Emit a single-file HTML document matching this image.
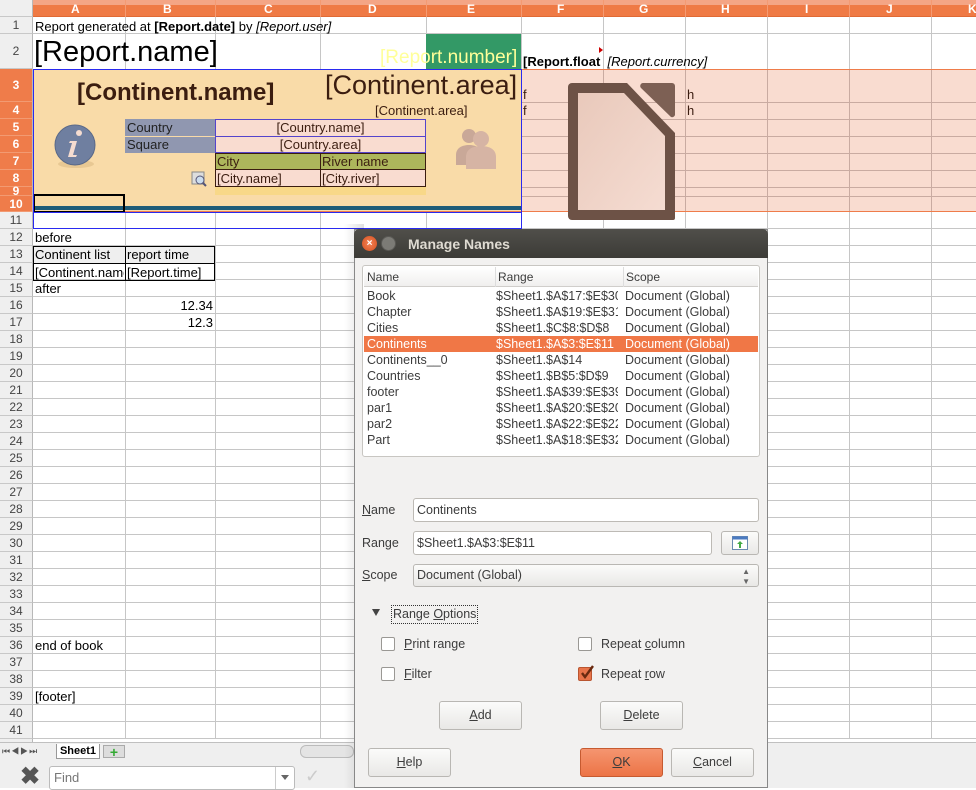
<!DOCTYPE html>
<html><head><meta charset="utf-8"><style>
*{margin:0;padding:0;box-sizing:border-box}
body{width:976px;height:788px;overflow:hidden;background:#fff;font-family:"Liberation Sans",sans-serif;font-size:13px;color:#000;position:relative}
.a{position:absolute}
.vl{position:absolute;top:17px;height:722px;width:1px;background:#c6c6c6}
.pv{position:absolute;top:70px;height:141px;width:1px;background:#c9aba1}
.rh{position:absolute;left:0;width:33px;text-align:center;color:#444;font-size:12px;background:#efefef;border-bottom:1px solid #c8c8c8;border-right:1px solid #b8b8b8}
.rh.o{background:#ef7c4a;color:#fff;font-weight:bold;border-bottom:1px solid #f29a72}
.t{position:absolute;white-space:nowrap;line-height:17px}
.dl{font-family:"Liberation Sans",sans-serif;font-size:12.5px;color:#3c3c3c}
.btn{position:absolute;height:29px;border:1px solid #b9b7b3;border-radius:3px;background:linear-gradient(#fbfbfa,#e9e8e6);text-align:center;line-height:27px;font-size:12.5px;color:#3c3c3c}
.inp{position:absolute;height:24px;border:1px solid #bdbab5;border-radius:3px;background:#fff;padding-left:3px;line-height:22px;font-size:12.5px;color:#3c3c3c}
.cb{position:absolute;width:14px;height:14px;border:1px solid #9a9894;border-radius:2px;background:#fff}
.lr{position:absolute;left:0;width:394px;height:16px;line-height:16px;font-size:12.5px;color:#3c3c3c}
.lr span{position:absolute}
</style></head><body>
<div class="a" style="left:33px;top:229px;width:943px;height:510px;background:repeating-linear-gradient(#fff 0 16px,#c6c6c6 16px 17px)"></div>
<div class="a" style="left:33px;top:17px;width:943px;height:52px;background:#fff"></div>
<div class="a" style="left:33px;top:33px;width:943px;height:1px;background:#c6c6c6"></div>
<div class="a" style="left:33px;top:212px;width:943px;height:17px;background:#fff;border-bottom:1px solid #c6c6c6"></div>
<div class="vl" style="left:125px"></div><div class="vl" style="left:215px"></div><div class="vl" style="left:320px"></div><div class="vl" style="left:426px"></div><div class="vl" style="left:521px"></div><div class="vl" style="left:603px"></div><div class="vl" style="left:685px"></div><div class="vl" style="left:767px"></div><div class="vl" style="left:849px"></div><div class="vl" style="left:931px"></div>
<!-- pink band -->
<div class="a" style="left:521px;top:69px;width:455px;height:143px;background-color:#f9dcd0;border-top:1px solid #ef7c4a;border-bottom:1px solid #ef7c4a;
background-image:linear-gradient(transparent 0 32px,#c9aba1 32px 33px,transparent 33px 49px,#c9aba1 49px 50px,transparent 50px 66px,#c9aba1 66px 67px,transparent 67px 83px,#c9aba1 83px 84px,transparent 84px 100px,#c9aba1 100px 101px,transparent 101px 117px,#c9aba1 117px 118px,transparent 118px 126px,#c9aba1 126px 127px,transparent 127px)"></div>
<div class="pv" style="left:603px"></div><div class="pv" style="left:685px"></div><div class="pv" style="left:767px"></div><div class="pv" style="left:849px"></div><div class="pv" style="left:931px"></div>
<!-- peach band -->
<div class="a" style="left:33px;top:69px;width:488px;height:143px;background:#f9dba8"></div>
<div class="a" style="left:33px;top:206px;width:488px;height:4px;background:#1d5b78"></div>
<div class="a" style="left:33px;top:211px;width:943px;height:1px;background:#ef7c4a"></div>
<div class="a" style="left:426px;top:34px;width:95px;height:35px;background:#339966"></div>
<!-- headers -->
<div class="a" style="left:0;top:0;width:976px;height:17px;background:linear-gradient(#f4a585 0 5px,#ef7a45 5px);border-bottom:1px solid #e06a35"></div>
<div class="a" style="left:0;top:0;width:33px;height:17px;background:#efefef;border-right:1px solid #b8b8b8;border-bottom:1px solid #c8c8c8"></div>
<div class="a" style="left:33px;top:0;width:943px;height:17px;font-weight:bold;font-size:12px;color:#fff;line-height:19px">
<span class="a" style="left:38px">A</span><span class="a" style="left:130px">B</span><span class="a" style="left:231px">C</span><span class="a" style="left:335px">D</span><span class="a" style="left:434px">E</span><span class="a" style="left:524px">F</span><span class="a" style="left:606px">G</span><span class="a" style="left:688px">H</span><span class="a" style="left:772px">I</span><span class="a" style="left:853px">J</span><span class="a" style="left:935px">K</span></div>
<div class="vl" style="top:0;height:17px;left:125px;background:#f49a72"></div><div class="vl" style="top:0;height:17px;left:215px;background:#f49a72"></div><div class="vl" style="top:0;height:17px;left:320px;background:#f49a72"></div><div class="vl" style="top:0;height:17px;left:426px;background:#f49a72"></div><div class="vl" style="top:0;height:17px;left:521px;background:#f49a72"></div><div class="vl" style="top:0;height:17px;left:603px;background:#f49a72"></div><div class="vl" style="top:0;height:17px;left:685px;background:#f49a72"></div><div class="vl" style="top:0;height:17px;left:767px;background:#f49a72"></div><div class="vl" style="top:0;height:17px;left:849px;background:#f49a72"></div><div class="vl" style="top:0;height:17px;left:931px;background:#f49a72"></div>
<div class="rh" style="top:17px;height:17px;line-height:17px">1</div>
<div class="rh" style="top:34px;height:35px;line-height:35px">2</div>
<div class="rh o" style="top:69px;height:33px;line-height:33px">3</div>
<div class="rh o" style="top:102px;height:17px;line-height:17px">4</div>
<div class="rh o" style="top:119px;height:17px;line-height:17px">5</div>
<div class="rh o" style="top:136px;height:17px;line-height:17px">6</div>
<div class="rh o" style="top:153px;height:17px;line-height:17px">7</div>
<div class="rh o" style="top:170px;height:17px;line-height:17px">8</div>
<div class="rh o" style="top:187px;height:9px;line-height:9px">9</div>
<div class="rh o" style="top:196px;height:16px;line-height:16px">10</div>
<div class="a" style="left:0;top:212px;width:33px;font-size:12px;color:#444;text-align:center;line-height:17px">
<div class="rh" style="position:static;height:17px">11</div><div class="rh" style="position:static;height:17px">12</div><div class="rh" style="position:static;height:17px">13</div><div class="rh" style="position:static;height:17px">14</div><div class="rh" style="position:static;height:17px">15</div><div class="rh" style="position:static;height:17px">16</div><div class="rh" style="position:static;height:17px">17</div><div class="rh" style="position:static;height:17px">18</div><div class="rh" style="position:static;height:17px">19</div><div class="rh" style="position:static;height:17px">20</div><div class="rh" style="position:static;height:17px">21</div><div class="rh" style="position:static;height:17px">22</div><div class="rh" style="position:static;height:17px">23</div><div class="rh" style="position:static;height:17px">24</div><div class="rh" style="position:static;height:17px">25</div><div class="rh" style="position:static;height:17px">26</div><div class="rh" style="position:static;height:17px">27</div><div class="rh" style="position:static;height:17px">28</div><div class="rh" style="position:static;height:17px">29</div><div class="rh" style="position:static;height:17px">30</div><div class="rh" style="position:static;height:17px">31</div><div class="rh" style="position:static;height:17px">32</div><div class="rh" style="position:static;height:17px">33</div><div class="rh" style="position:static;height:17px">34</div><div class="rh" style="position:static;height:17px">35</div><div class="rh" style="position:static;height:17px">36</div><div class="rh" style="position:static;height:17px">37</div><div class="rh" style="position:static;height:17px">38</div><div class="rh" style="position:static;height:17px">39</div><div class="rh" style="position:static;height:17px">40</div><div class="rh" style="position:static;height:17px">41</div><div class="rh" style="position:static;height:6px"></div></div>
<!-- cell text -->
<div class="t" style="left:35px;top:18px">Report generated at <b>[Report.date]</b> by <i>[Report.user]</i></div>
<div class="t" style="left:34px;top:36px;font-size:29px;line-height:32px">[Report.name]</div>
<div class="t" style="left:380px;top:47px;font-size:19px;line-height:22px;color:#ffff99">[Report.number]</div>
<div class="t" style="left:523px;top:53px"><b>[Report.float</b> &nbsp;<i>[Report.currency]</i></div>
<div class="a" style="left:599px;top:47px;width:0;height:0;border-left:4px solid #c00;border-top:3px solid transparent;border-bottom:3px solid transparent"></div>
<div class="t" style="left:77px;top:80px;font-size:24px;font-weight:bold;color:#3b1d10;line-height:26px">[Continent.name]</div>
<div class="t" style="left:325px;top:71px;font-size:27px;color:#3b1d10;line-height:29px">[Continent.area]</div>
<div class="t" style="left:375px;top:102px;color:#3b1d10">[Continent.area]</div>
<div class="a" style="left:125px;top:119px;width:90px;height:34px;background:#9097b0"></div>
<div class="a" style="left:125px;top:136px;width:90px;height:1px;background:#f9dba8"></div>
<div class="t" style="left:127px;top:119px;color:#222">Country</div>
<div class="t" style="left:127px;top:136px;color:#222">Square</div>
<div class="a" style="left:215px;top:119px;width:211px;height:34px;background:#f9dcd0;border:1px solid #5544cc"></div>
<div class="a" style="left:215px;top:136px;width:211px;height:1px;background:#5544cc"></div>
<div class="t" style="left:215px;width:211px;text-align:center;top:119px;color:#3b1d10">[Country.name]</div>
<div class="t" style="left:215px;width:211px;text-align:center;top:136px;color:#3b1d10">[Country.area]</div>
<div class="a" style="left:215px;top:153px;width:211px;height:17px;background:#adb65c;border:1px solid #3b1d10"></div>
<div class="a" style="left:215px;top:170px;width:211px;height:17px;background:#f9dcd0;border:1px solid #3b1d10;border-top:0"></div>
<div class="a" style="left:320px;top:153px;width:1px;height:34px;background:#3b1d10"></div>
<div class="a" style="left:215px;top:187px;width:211px;height:8px;background:#f8d888"></div>
<div class="t" style="left:217px;top:153px;color:#3b1d10">City</div><div class="t" style="left:322px;top:153px;color:#3b1d10">River name</div>
<div class="t" style="left:217px;top:170px;color:#3b1d10">[City.name]</div><div class="t" style="left:322px;top:170px;color:#3b1d10">[City.river]</div>
<div class="a" style="left:33px;top:194px;width:92px;height:19px;border:2px solid #000"></div>
<div class="a" style="left:33px;top:69px;width:489px;height:160px;border:1px solid #2a2af0"></div>
<div class="a" style="left:33px;top:212px;width:489px;height:1px;background:#2a2af0"></div>
<svg class="a" style="left:50px;top:120px" width="52" height="52"><ellipse cx="26" cy="44" rx="18" ry="4" fill="#e8c893"/><circle cx="25" cy="25" r="20" fill="#6f7fa0" stroke="#5a6988"/><circle cx="29" cy="13" r="3" fill="#f5dcd0"/><path d="M20 21h7l-4 14h4l-1 2h-8l4-14h-3z" fill="#f5dcd0"/></svg>
<svg class="a" style="left:452px;top:125px" width="50" height="46" fill="#c9a898"><circle cx="17" cy="11" r="7"/><path d="M4 40v-10c0-7 6-10 13-10s13 3 13 10v10z"/><circle cx="29" cy="14" r="8" fill="#d6b4a4"/><path d="M14 44v-12c0-8 7-11 15-11s15 3 15 11v12z" fill="#d6b4a4"/></svg>
<svg class="a" style="left:191px;top:171px" width="16" height="16"><rect x="1" y="1" width="12" height="12" fill="#ddd" stroke="#888"/><circle cx="9" cy="9" r="4" fill="#cde" stroke="#557"/><path d="M12 12l3 3" stroke="#557" stroke-width="2"/></svg>
<div class="t" style="left:523px;top:86px;color:#3b1d10">f</div><div class="t" style="left:523px;top:102px;color:#3b1d10">f</div>
<div class="t" style="left:687px;top:86px;color:#3b1d10">h</div><div class="t" style="left:687px;top:102px;color:#3b1d10">h</div>
<svg class="a" style="left:568px;top:83px" width="108" height="137"><defs><linearGradient id="g" x1="0" y1="0" x2="1" y2="1"><stop offset="0" stop-color="#e9c9bb"/><stop offset="1" stop-color="#f5dcd2"/></linearGradient></defs><path d="M4 0h55l48 50v85a2 2 0 0 1-2 2H4a4 4 0 0 1-4-4V4a4 4 0 0 1 4-4z" fill="#6d5246"/><path d="M75 0h29a3 3 0 0 1 3 3v29a3 3 0 0 1-4 2L73 5a3 3 0 0 1 2-5z" fill="#7d6054"/><path d="M10 10h46l41 43v74H10z" fill="url(#g)"/></svg>
<div class="t" style="left:35px;top:229px">before</div>
<div class="a" style="left:33px;top:246px;width:182px;height:35px;border:1px solid #000"></div>
<div class="a" style="left:34px;top:247px;width:180px;height:16px;background:#efefef"></div>
<div class="a" style="left:125px;top:246px;width:1px;height:35px;background:#000"></div><div class="a" style="left:33px;top:263px;width:182px;height:1px;background:#000"></div>
<div class="t" style="left:35px;top:246px">Continent list</div><div class="t" style="left:127px;top:246px">report time</div>
<div class="t" style="left:35px;top:264px;width:89px;overflow:hidden">[Continent.name]</div><div class="t" style="left:127px;top:264px">[Report.time]</div>
<div class="t" style="left:35px;top:280px">after</div>
<div class="t" style="left:125px;width:88px;text-align:right;top:297px">12.34</div>
<div class="t" style="left:125px;width:88px;text-align:right;top:314px">12.3</div>
<div class="t" style="left:35px;top:637px">end of book</div>
<div class="t" style="left:35px;top:688px">[footer]</div>
<div class="a" style="left:0;top:742px;width:976px;height:18px;background:#efefef;border-top:1px solid #c0c0c0"></div>
<div class="a" style="left:2px;top:746px;font-size:9px;color:#555;letter-spacing:1px">⏮◀▶⏭</div>
<div class="a" style="left:56px;top:744px;width:44px;height:15px;background:#fff;border:1px solid #999;border-top:0;font-weight:bold;font-size:11px;line-height:14px;text-align:center">Sheet1</div>
<div class="a" style="left:103px;top:745px;width:22px;height:13px;background:#ddd;border:1px solid #aaa;color:#3a3;font-weight:bold;text-align:center;line-height:12px;font-size:14px">+</div>
<div class="a" style="left:300px;top:745px;width:54px;height:13px;background:#e4e4e4;border:1px solid #bbb;border-radius:6px"></div>
<div class="a" style="left:0;top:760px;width:976px;height:28px;background:#efefef"></div>
<div class="a" style="left:20px;top:765px;font-size:24px;font-weight:bold;color:#555;line-height:24px">✖</div>
<div class="a" style="left:49px;top:766px;width:246px;height:24px;background:#fff;border:1px solid #bbb;border-radius:3px;color:#777;padding-left:4px;line-height:22px">Find</div>
<div class="a" style="left:275px;top:767px;width:1px;height:22px;background:#ccc"></div>
<div class="a" style="left:281px;top:775px;border-top:5px solid #666;border-left:4px solid transparent;border-right:4px solid transparent"></div>
<div class="a" style="left:305px;top:766px;color:#ccc;font-size:18px">✓</div>
<!-- dialog -->
<div class="a" style="left:344px;top:224px;width:20px;height:564px;background:linear-gradient(90deg,rgba(0,0,0,0),rgba(0,0,0,.12))"></div>
<div class="a" style="left:354px;top:229px;width:414px;height:559px;background:#f2f1f0;border:1px solid #888"></div>
<div class="a" style="left:354px;top:229px;width:414px;height:29px;background:linear-gradient(#504f4a,#3c3b37);border-radius:5px 5px 0 0"></div>
<div class="a" style="left:362px;top:236px;width:15px;height:15px;border-radius:50%;background:radial-gradient(#f58357,#d4501f);color:#fff;font-size:10px;text-align:center;line-height:15px;font-weight:bold">×</div>
<div class="a" style="left:381px;top:236px;width:15px;height:15px;border-radius:50%;background:#7c7b76;border:1px solid #5a5955"></div>
<div class="a" style="left:408px;top:236px;font-weight:bold;font-size:14px;color:#dfdbd2;line-height:16px">Manage Names</div>
<div class="a" style="left:362px;top:265px;width:398px;height:192px;background:#fff;border:1px solid #c8c6c2;border-radius:3px"></div>
<div class="a" style="left:364px;top:267px;width:394px;height:20px;background:linear-gradient(#fff,#f0efee);border-bottom:1px solid #d0cecb;font-size:12px;color:#3c3c3c;line-height:20px">
<span class="a" style="left:3px">Name</span><span class="a" style="left:131px;border-left:1px solid #ddd;padding-left:2px">Range</span><span class="a" style="left:259px;border-left:1px solid #ddd;padding-left:2px">Scope</span></div>
<div class="a" style="left:364px;top:288px;width:394px;height:165px;overflow:hidden">
<div class="lr" style="top:0"><span style="left:3px">Book</span><span style="left:132px;width:122px;overflow:hidden">$Sheet1.$A$17:$E$30</span><span style="left:261px">Document (Global)</span></div>
<div class="lr" style="top:16px"><span style="left:3px">Chapter</span><span style="left:132px;width:122px;overflow:hidden">$Sheet1.$A$19:$E$31</span><span style="left:261px">Document (Global)</span></div>
<div class="lr" style="top:32px"><span style="left:3px">Cities</span><span style="left:132px;width:122px;overflow:hidden">$Sheet1.$C$8:$D$8</span><span style="left:261px">Document (Global)</span></div>
<div class="lr" style="top:48px;background:#f07746;color:#fff"><span style="left:3px">Continents</span><span style="left:132px;width:122px;overflow:hidden">$Sheet1.$A$3:$E$11</span><span style="left:261px">Document (Global)</span></div>
<div class="lr" style="top:64px"><span style="left:3px">Continents__0</span><span style="left:132px;width:122px;overflow:hidden">$Sheet1.$A$14</span><span style="left:261px">Document (Global)</span></div>
<div class="lr" style="top:80px"><span style="left:3px">Countries</span><span style="left:132px;width:122px;overflow:hidden">$Sheet1.$B$5:$D$9</span><span style="left:261px">Document (Global)</span></div>
<div class="lr" style="top:96px"><span style="left:3px">footer</span><span style="left:132px;width:122px;overflow:hidden">$Sheet1.$A$39:$E$39</span><span style="left:261px">Document (Global)</span></div>
<div class="lr" style="top:112px"><span style="left:3px">par1</span><span style="left:132px;width:122px;overflow:hidden">$Sheet1.$A$20:$E$20</span><span style="left:261px">Document (Global)</span></div>
<div class="lr" style="top:128px"><span style="left:3px">par2</span><span style="left:132px;width:122px;overflow:hidden">$Sheet1.$A$22:$E$22</span><span style="left:261px">Document (Global)</span></div>
<div class="lr" style="top:144px"><span style="left:3px">Part</span><span style="left:132px;width:122px;overflow:hidden">$Sheet1.$A$18:$E$32</span><span style="left:261px">Document (Global)</span></div>
</div>
<div class="t dl" style="left:362px;top:502px"><u>N</u>ame</div>
<div class="inp" style="left:413px;top:498px;width:346px">Continents</div>
<div class="t dl" style="left:362px;top:535px">Range</div>
<div class="inp" style="left:413px;top:531px;width:299px">$Sheet1.$A$3:$E$11</div>
<div class="btn" style="left:721px;top:531px;width:38px;height:24px"></div>
<svg class="a" style="left:732px;top:536px" width="16" height="14"><rect x="0.5" y="0.5" width="15" height="13" fill="#fff" stroke="#6a8ab0"/><rect x="0.5" y="0.5" width="15" height="3" fill="#4a7ac0"/><path d="M8 5l-3 3h2v4h2V8h2z" fill="#4a4"/></svg>
<div class="t dl" style="left:362px;top:567px"><u>S</u>cope</div>
<div class="btn" style="left:413px;top:564px;width:346px;height:23px;text-align:left;padding-left:3px;line-height:21px">Document (Global)<span class="a" style="right:8px;font-size:8px;color:#666;line-height:10px;top:2px">▲<br>▼</span></div>
<div class="a" style="left:372px;top:609px;border-top:7px solid #444;border-left:4px solid transparent;border-right:4px solid transparent"></div>
<div class="t dl" style="left:391px;top:605px;border:1px dotted #333;padding:0 1px">Range <u>O</u>ptions</div>
<div class="cb" style="left:381px;top:637px"></div><div class="t dl" style="left:404px;top:636px"><u>P</u>rint range</div>
<div class="cb" style="left:381px;top:667px"></div><div class="t dl" style="left:404px;top:666px"><u>F</u>ilter</div>
<div class="cb" style="left:578px;top:637px"></div><div class="t dl" style="left:601px;top:636px">Repeat <u>c</u>olumn</div>
<div class="cb" style="left:578px;top:667px;background:#e8744a;border-color:#b95530"></div>
<svg class="a" style="left:579px;top:664px" width="16" height="16"><path d="M3 9l3 4 8-11" stroke="#6a2a10" stroke-width="2.4" fill="none"/></svg>
<div class="t dl" style="left:601px;top:666px">Repeat <u>r</u>ow</div>
<div class="btn" style="left:439px;top:701px;width:83px"><u>A</u>dd</div>
<div class="btn" style="left:600px;top:701px;width:83px"><u>D</u>elete</div>
<div class="btn" style="left:368px;top:748px;width:83px"><u>H</u>elp</div>
<div class="btn" style="left:580px;top:748px;width:83px;background:linear-gradient(#f59570,#ec7446);border-color:#c65a30;color:#3c3c3c"><u>O</u>K</div>
<div class="btn" style="left:671px;top:748px;width:83px"><u>C</u>ancel</div>
</body></html>
